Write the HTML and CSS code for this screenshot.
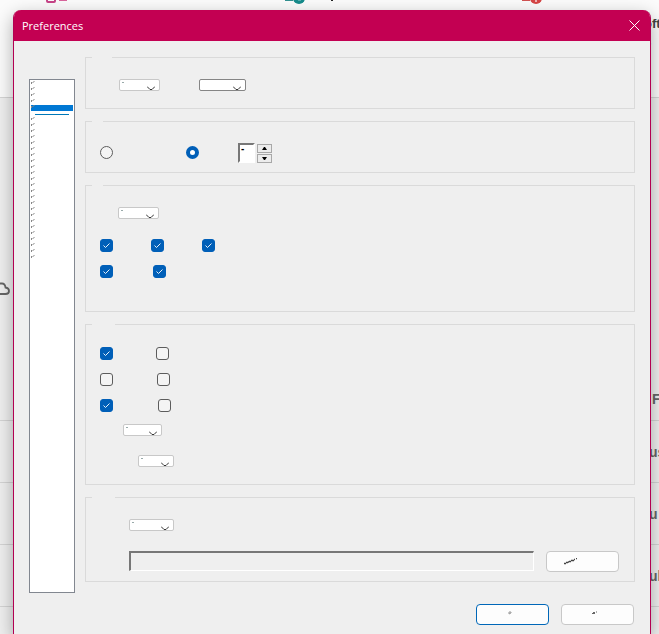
FILE: index.html
```html
<!DOCTYPE html>
<html lang="en">
<head>
<meta charset="utf-8">
<title>Preferences</title>
<link rel="stylesheet" href="styles.css">
</head>
<body>
<div class="backdrop">
  <div class="strip strip-head">
    <svg class="tool tool-pink" viewBox="0 0 22 4" aria-hidden="true"><path d="M1 0v1q0 1 1 1h6q1 0 1-1V0" fill="none" stroke="#c74488" stroke-width="2"/><path d="M13 0h8" stroke="#d9669c" stroke-width="2"/></svg>
    <svg class="tool tool-teal" viewBox="0 0 50 4" aria-hidden="true"><path d="M1 0h8" stroke="#329090" stroke-width="2"/><circle cx="15" cy="-2" r="6" fill="#168b8b"/><path d="M14 0h3" stroke="#9ed0d0" stroke-width="1"/><path d="M47 0h2v1h-2z" fill="#222"/></svg>
    <svg class="tool tool-red" viewBox="0 0 22 4" aria-hidden="true"><path d="M1 0h8" stroke="#d15252" stroke-width="2"/><circle cx="15" cy="-2" r="6" fill="#d64545"/><path d="M15 0v2" stroke="#efb5b5" stroke-width="2"/></svg>
    <span class="peek peek-head">oft<br>s</span>
  </div>
  <div class="strip strip-tall">
    <svg class="cloud" viewBox="0 0 10 14" aria-hidden="true"><path d="M0 1.500h2q3 0 3.500 4q3.500.5 3.500 3.500q0 3-3.500 3H0" fill="none" stroke="#666" stroke-width="1.800"/></svg>
    <span class="peek peek-f">F</span>
  </div>
  <div class="strip"><span class="peek">us</span></div>
  <div class="strip"><span class="peek">u</span></div>
  <div class="strip"><span class="peek">ul</span></div>
  <div class="strip"></div>
</div>
<main class="dialog">
  <header class="titlebar">
    <h1>Preferences</h1>
    <button class="close" type="button" aria-label="Close"><svg viewBox="0 0 11 11" aria-hidden="true"><path d="M.5.5l10 10M10.500.5l-10 10" fill="none" stroke="#fff"/></svg></button>
  </header>
  <form class="content">
    <div class="panes">
      <ul class="categories" aria-label="Categories">
        <li></li><li></li><li></li><li></li><li class="selected"></li>
        <li class="divider"></li>
        <li></li><li></li><li></li><li></li><li></li><li></li><li></li><li></li>
        <li></li><li></li><li></li><li></li><li></li><li></li><li></li><li></li>
        <li></li><li></li><li></li><li></li><li></li><li></li><li></li><li></li>
      </ul>
      <div class="groups">
        <fieldset class="group">
          <legend class="legend-m"></legend>
          <div class="row indent-m gap-l">
            <select class="w-m" aria-label="First choice"><option></option></select>
            <select class="w-xl strong" aria-label="Second choice"><option></option></select>
          </div>
        </fieldset>
        <fieldset class="group compact">
          <legend></legend>
          <div class="row radios">
            <input type="radio" name="mode" aria-label="Automatic">
            <input type="radio" name="mode" aria-label="Fixed" checked>
            <div class="spinner">
              <input type="text" value="-" aria-label="Value">
              <div class="steps">
                <button type="button" aria-label="Increase"><svg viewBox="0 0 5 3" aria-hidden="true"><path d="M0 3h5L3 0H2z"/></svg></button>
                <button type="button" aria-label="Decrease"><svg viewBox="0 0 5 3" aria-hidden="true"><path d="M0 0h5L3 3H2z"/></svg></button>
              </div>
            </div>
          </div>
        </fieldset>
        <fieldset class="group spacious">
          <legend></legend>
          <div class="row indent-s"><select class="w-m" aria-label="Units"><option></option></select></div>
          <div class="row checks after-select">
            <input type="checkbox" aria-label="Option 1" checked>
            <input type="checkbox" aria-label="Option 2" checked>
            <input type="checkbox" aria-label="Option 3" checked>
          </div>
          <div class="row checks checks-b">
            <input type="checkbox" aria-label="Option 4" checked>
            <input type="checkbox" aria-label="Option 5" checked>
          </div>
        </fieldset>
        <fieldset class="group tall">
          <legend class="legend-l"></legend>
          <div class="row checks checks-c">
            <input type="checkbox" aria-label="Option 6" checked>
            <input type="checkbox" aria-label="Option 7">
          </div>
          <div class="row checks checks-d">
            <input type="checkbox" aria-label="Option 8">
            <input type="checkbox" aria-label="Option 9">
          </div>
          <div class="row checks checks-e">
            <input type="checkbox" aria-label="Option 10" checked>
            <input type="checkbox" aria-label="Option 11">
          </div>
          <div class="row indent-l"><select class="w-s" aria-label="Style"><option></option></select></div>
          <div class="row indent-xl"><select class="w-xs" aria-label="Size"><option></option></select></div>
        </fieldset>
        <fieldset class="group compact">
          <legend class="legend-l"></legend>
          <div class="row indent-xxl"><select class="w-l" aria-label="Source"><option></option></select></div>
          <div class="row indent-xxl after-select file">
            <input type="text" class="path" aria-label="Folder" readonly>
            <button type="button" class="btn" aria-label="Browse"><svg class="scribble" viewBox="0 0 14 7" aria-hidden="true"><path d="M0 5.500h2M2 4.500h2M4 4h1M5 3.500h2M7 2.500h3M10 1.500h1M12 .5h1" fill="none" stroke="#444" stroke-width="1.400"/></svg></button>
          </div>
        </fieldset>
      </div>
    </div>
    <footer class="actions">
      <button type="submit" class="btn primary" aria-label="OK"><svg class="speck" viewBox="0 0 6 4" aria-hidden="true"><path d="M2 3V1h2v1z" fill="none" stroke="#999"/></svg></button>
      <button type="button" class="btn" aria-label="Cancel"><svg class="speck" viewBox="0 0 6 4" aria-hidden="true"><path d="M0 2.500h3M1 1.500h2M4 1h1" fill="none" stroke="#666"/></svg></button>
    </footer>
  </form>
</main>
</body>
</html>
```
FILE: styles.css
```css
* { box-sizing: border-box; }
body {
  margin: 0;
  min-height: 100vh;
  position: relative;
  overflow: hidden;
  background: #efefef;
  font-family: "Open Sans", "Noto Sans", sans-serif;
}

/* Window behind the dialog */
.backdrop {
  position: absolute;
  inset: 0;
  overflow: hidden;
  display: grid;
  grid-template-columns: minmax(0, 1fr);
  grid-template-rows: 98px 323px 62px 62px 62px 62px;
}
.strip {
  position: relative;
  display: flex;
  align-items: center;
  justify-content: flex-end;
  border-bottom: 1px solid #d4d4d4;
}
.strip-head { background: #fbfbfb; }
.peek {
  width: 10px;
  flex: none;
  white-space: nowrap;
  font: bold 14px/18px "Liberation Sans", sans-serif;
  color: #666;
}
.peek-head { align-self: flex-start; width: 15px; margin-top: 15px; font-size: 13px; color: #444; text-indent: 0; }
.peek-f { align-self: flex-end; width: 7px; margin-bottom: 12px; }
.tool { position: absolute; top: 0; width: 22px; height: 4px; }
.tool-pink { left: 46px; }
.tool-teal { left: 284px; width: 50px; }
.tool-red { left: 521px; }
.cloud { position: absolute; left: 0; top: 184px; width: 10px; height: 14px; }

/* Dialog */
.dialog {
  position: relative;
  margin: 10px 8px 0 13px;
  min-height: calc(100vh - 10px);
  background: #efefef;
  border: 1px solid #b30052;
  border-width: 0 1px;
  border-radius: 8px 8px 0 0;
  box-shadow: 0 6px 18px rgba(0, 0, 0, .32);
}
.titlebar {
  display: flex;
  align-items: center;
  justify-content: space-between;
  height: 31px;
  padding: 0 10px 0 8px;
  background: #c30052;
  border-radius: 7px 7px 0 0;
  color: #fff;
}
.titlebar h1 { margin: 0; font-size: 11px; line-height: 16px; font-weight: normal; }
.close { display: flex; padding: 0; border: 0; background: none; }
.close svg { width: 11px; height: 11px; }
.content { padding: 16px 15px 8px; }
.panes { display: flex; gap: 10px; }

.categories {
  flex: none;
  width: 46px;
  margin: 22px 0 0;
  padding: 1px;
  list-style: none;
  background: #fff;
  border: 1px solid #828790;
}
.categories li {
  height: 6px;
  background: url("data:image/svg+xml,%3Csvg xmlns='http://www.w3.org/2000/svg' width='4' height='3'%3E%3Cpath d='M.5 3V1M1.500 1.500h1M2.500 .5h1' stroke='%23888' fill='none'/%3E%3C/svg%3E") no-repeat;
}
.categories .selected { background-color: #0078d4; }
.categories .divider { height: 1px; margin: 3px 4px 2px; background: #0078b8; }

.groups { flex: 1; min-width: 0; display: grid; gap: 12px; padding-bottom: 11px; align-content: start; }
.group { min-width: 0; margin: 0; padding: 21px 15px 17px 14px; border: 1px solid #dadada; }
.compact { padding-bottom: 9px; }
.spacious { padding-bottom: 33px; }
.tall { padding-top: 22px; }
legend { width: 11px; height: 1px; margin-left: -8px; padding: 0; }
.legend-m { width: 20px; }
.legend-l { width: 23px; }

.row { display: flex; }
.indent-s { padding-left: 18px; }
.indent-m { padding-left: 19px; }
.indent-l { padding-left: 23px; margin-top: 12px; }
.indent-xl { padding-left: 38px; margin-top: 19px; }
.indent-xxl { padding-left: 29px; }
.gap-l { gap: 39px; }
.after-select { margin-top: 20px; }
.checks { gap: 38px; }
.checks-b { gap: 40px; }
.checks-c { gap: 43px; }
.checks-d { gap: 44px; }
.checks-e { gap: 45px; }
.checks + .checks { margin-top: 13px; }

select {
  appearance: none;
  height: 12px;
  margin: 0;
  padding: 0;
  border: 1px solid #c8c8c8;
  border-radius: 2px;
  background:
    url("data:image/svg+xml,%3Csvg xmlns='http://www.w3.org/2000/svg' width='8' height='4'%3E%3Cpath d='M0 .5l3 3h2l3-3' stroke='%23333' fill='none'/%3E%3C/svg%3E") right 4px bottom 0 no-repeat,
    url("data:image/svg+xml,%3Csvg xmlns='http://www.w3.org/2000/svg' width='3' height='2'%3E%3Cpath d='M0 .5h2' stroke='%2399aaaa'/%3E%3C/svg%3E") 2px 2px no-repeat,
    #fff;
}
.strong {
  border-color: #858585;
  background:
    url("data:image/svg+xml,%3Csvg xmlns='http://www.w3.org/2000/svg' width='8' height='4'%3E%3Cpath d='M0 .5l3 3h2l3-3' stroke='%23333' fill='none'/%3E%3C/svg%3E") right 4px bottom 0 no-repeat,
    #fff;
}
.w-xs { width: 36px; }
.w-s { width: 39px; }
.w-m { width: 41px; }
.w-l { width: 45px; }
.w-xl { width: 47px; }

input[type="checkbox"], input[type="radio"] {
  appearance: none;
  flex: none;
  width: 13px;
  height: 13px;
  margin: 0;
  border: 1px solid #5c5c5c;
  border-radius: 3px;
  background: #f4f4f4;
}
input[type="checkbox"]:checked {
  border-color: #005fb8;
  background: #005fb8 url("data:image/svg+xml,%3Csvg xmlns='http://www.w3.org/2000/svg' width='7' height='5'%3E%3Cpath d='M.5 2.500l2 2 4-4' stroke='%23fff' stroke-width='.9' fill='none'/%3E%3C/svg%3E") center no-repeat;
}
input[type="radio"] { border-radius: 50%; }
input[type="radio"]:checked { border: 4px solid #005fb8; background: #fff; }
.radios input[type="radio"] { margin-top: 3px; }
.radios input + input { margin-left: 73px; }

.spinner { display: flex; gap: 2px; margin-left: 39px; }
.spinner input, .path {
  min-width: 0;
  height: 20px;
  margin: 0;
  border: 2px solid;
  border-color: #777 #fff #fff #777;
  border-radius: 0;
  background: #fff;
}
.spinner input { width: 17px; padding: 0 0 10px 1px; font: bold 10px/6px "Liberation Sans", sans-serif; }
.steps { display: grid; gap: 1px; align-content: end; }
.steps button {
  display: flex;
  align-items: center;
  justify-content: center;
  width: 15px;
  height: 9px;
  padding: 0;
  border: 1px solid #a8a8a8;
  background: #ececec;
}
.steps svg { width: 5px; height: 3px; }

.file { gap: 12px; }
.path { flex: 1; background: #efefef; border-width: 2px 1px 1px 2px; }
.btn {
  display: flex;
  align-items: center;
  justify-content: center;
  flex: none;
  width: 73px;
  height: 21px;
  padding: 0;
  border: 1px solid #c8c8c8;
  border-radius: 4px;
  background: #fdfdfd;
}
.scribble { width: 14px; height: 7px; margin-right: 24px; }
.speck { width: 6px; height: 4px; margin: 0 6px 3px 0; }
.actions { display: flex; justify-content: flex-end; gap: 12px; margin-top: 11px; padding-right: 1px; }
.primary { border-color: #0067b8; }
```
